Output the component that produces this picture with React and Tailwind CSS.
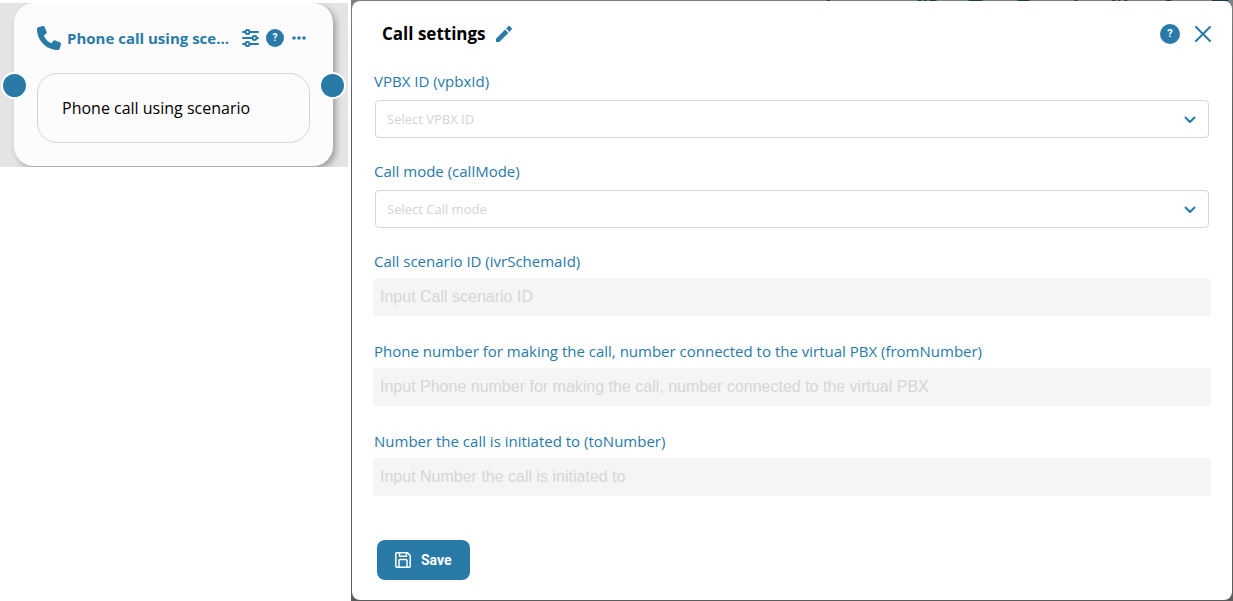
import React, { useState } from 'react';

const selects = [
  { id: 'vpbxId', label: 'VPBX ID (vpbxId)', placeholder: 'Select VPBX ID' },
  { id: 'callMode', label: 'Call mode (callMode)', placeholder: 'Select Call mode' },
];

const inputs = [
  { id: 'ivrSchemaId', label: 'Call scenario ID (ivrSchemaId)', placeholder: 'Input Call scenario ID' },
  {
    id: 'fromNumber',
    label: 'Phone number for making the call, number connected to the virtual PBX (fromNumber)',
    placeholder: 'Input Phone number for making the call, number connected to the virtual PBX',
  },
  { id: 'toNumber', label: 'Number the call is initiated to (toNumber)', placeholder: 'Input Number the call is initiated to' },
];

function PhoneIcon() {
  return (
    <svg className="w-6 h-6 shrink-0" viewBox="0 0 512 512" fill="currentColor">
      <path d="M164.9 24.6c-7.700-18.600-28-28.500-47.400-23.200l-88 24C12.100 30.200 0 46 0 64c0 247.400 200.600 448 448 448 18 0 33.800-12.100 38.600-29.500l24-88c5.300-19.400-4.600-39.700-23.200-47.400l-96-40c-16.300-6.800-35.200-2.100-46.300 11.600L304.700 368C234.300 334.700 177.300 277.700 144 207.300L193.300 167c13.700-11.200 18.400-30 11.600-46.300l-40-96z" />
    </svg>
  );
}

function SlidersIcon() {
  return (
    <svg className="w-[17px] h-[18px]" viewBox="0 0 17 18" fill="none" stroke="currentColor" strokeWidth="2" strokeLinecap="round">
      <path d="M1 3h2M8 3h8M1 9h9M15 9h1M1 15h2M8 15h8" />
      <circle cx="5.500" cy="3" r="2" />
      <circle cx="12.500" cy="9" r="2" />
      <circle cx="5.500" cy="15" r="2" />
    </svg>
  );
}

function DotsIcon() {
  return (
    <svg className="w-[14px] h-[4px]" viewBox="0 0 14 4" fill="currentColor">
      <circle cx="2" cy="2" r="1.800" />
      <circle cx="7" cy="2" r="1.800" />
      <circle cx="12" cy="2" r="1.800" />
    </svg>
  );
}

function PencilIcon() {
  return (
    <svg className="w-4 h-4" viewBox="0 0 16 16" fill="currentColor">
      <path d="M0 12.700V16h3.300L12.400 6.900 9.100 3.600zM10.100 2.600l3.300 3.300 2.100-2.100c.600-.600.600-1.300 0-1.900L14.100.500c-.600-.600-1.300-.600-1.900 0z" />
    </svg>
  );
}

function CloseIcon() {
  return (
    <svg className="w-4 h-4" viewBox="0 0 16 16" fill="none" stroke="currentColor" strokeWidth="2" strokeLinecap="round">
      <path d="M1 1l14 14M15 1L1 15" />
    </svg>
  );
}

function ChevronIcon() {
  return (
    <svg className="w-3 h-2 pointer-events-none absolute right-[13px] top-4" viewBox="0 0 12 8" fill="none" stroke="#2a7aa8" strokeWidth="2" strokeLinecap="round" strokeLinejoin="round">
      <path d="M1.500 1.500L6 6l4.500-4.500" />
    </svg>
  );
}

function SaveIcon() {
  return (
    <svg className="w-4 h-4" viewBox="0 0 16 16" fill="none" stroke="currentColor" strokeWidth="1.500" strokeLinejoin="round">
      <path d="M.800 1.800a1 1 0 0 1 1-1h10.700l2.700 2.700v10.700a1 1 0 0 1-1 1H1.800a1 1 0 0 1-1-1z" />
      <path d="M4.500 1v3.200h7V1M4 15V8.500a1 1 0 0 1 1-1h6a1 1 0 0 1 1 1V15" />
    </svg>
  );
}

// Tops of the toolbar icons that stay visible above the dialog
function ToolbarEdge() {
  return (
    <svg className="block w-full h-px" viewBox="0 0 882 1" preserveAspectRatio="none" fill="#173c56">
      <path d="M476 0h3v1h-3zM567 0h4v1h-4zM573 0h3v1h-3zM579 0h7v1h-7zM618 0h14v1h-14zM667 0h12v1h-12zM724 0h3v1h-3zM762 0h3v1h-3zM768 0h2v1h-2zM774 0h3v1h-3zM816 0h5v1h-5zM862 0h16v1h-16z" />
    </svg>
  );
}

function ScenarioNode() {
  return (
    <section className="w-[348px] shrink-0 self-start mt-[3px] pl-[14px] pr-[15px] pb-px bg-[#e4e4e4] overflow-hidden">
      <div className="relative bg-[#fcfcfc] rounded-[20px] px-[23px] pt-5 pb-[23px] shadow-[3px_3px_6px_rgba(0,0,0,0.3)]">
        <div className="h-[30px] flex items-center text-[#2a7aa8]">
          <PhoneIcon />
          <h2 title="Phone call using scenario" className="ml-1.5 w-[167px] whitespace-nowrap font-bold text-[15px] leading-6">
            Phone call using sce...
          </h2>
          <button type="button" aria-label="Parameters" className="ml-2">
            <SlidersIcon />
          </button>
          <button type="button" aria-label="Help" className="ml-[7px] w-[18px] h-[18px] rounded-full bg-[#2a7aa8] text-white font-[Roboto] font-bold text-[10px] leading-[18px]">
            ?
          </button>
          <button type="button" aria-label="More" className="ml-2">
            <DotsIcon />
          </button>
        </div>
        <div className="mt-5 h-[70px] flex items-center px-6 border border-[#d6d6d6] rounded-[20px] text-base text-black">
          Phone call using scenario
        </div>
        <span className="absolute -left-[13px] top-[69px] w-[27px] h-[27px] rounded-full bg-[#2a7aa8] border-2 border-white" />
        <span className="absolute -right-[13px] top-[69px] w-[27px] h-[27px] rounded-full bg-[#2a7aa8] border-2 border-white" />
      </div>
    </section>
  );
}

function CallSettings() {
  const [values, setValues] = useState({});

  const handleChange = (e) => setValues({ ...values, [e.target.id]: e.target.value });

  return (
    <section className="flex-1 min-w-0 flex flex-col pl-px pr-px pb-px bg-linear-to-b from-[#7f7f7f] to-[#5c5c5c] to-20%">
      <ToolbarEdge />
      <div className="flex-1 bg-white rounded-lg">
        <header className="h-[68px] pb-0.5 flex items-center pl-[30px] pr-[21px]">
          <h1 className="font-bold text-[17px] leading-6 text-black">Call settings</h1>
          <button type="button" aria-label="Rename" className="ml-2.5 text-[#2a7aa8]">
            <PencilIcon />
          </button>
          <button type="button" aria-label="Help" className="ml-auto w-5 h-5 rounded-full bg-[#2a7aa8] text-white font-[Roboto] font-bold text-[11px] leading-5">
            ?
          </button>
          <button type="button" aria-label="Close" className="ml-[15px] text-[#2a7aa8]">
            <CloseIcon />
          </button>
        </header>

        <form className="px-[21px] pb-5" onSubmit={(e) => e.preventDefault()}>
          {selects.map((field) => (
            <div key={field.id} className="mb-[21px]">
              <label htmlFor={field.id} className="block pl-px text-[15px] leading-6 text-[#2a7aa8]">
                {field.label}
              </label>
              <div className="relative mt-[7px] mx-0.5">
                <select
                  id={field.id}
                  value={values[field.id] || ''}
                  onChange={handleChange}
                  className="block w-full h-[38px] pl-[11px] pr-10 pt-0.5 appearance-none bg-white border border-[#d6d6d6] rounded text-[13px] text-[#d4d4d4]"
                >
                  <option value="">{field.placeholder}</option>
                </select>
                <ChevronIcon />
              </div>
            </div>
          ))}

          {inputs.map((field) => (
            <div key={field.id} className="mb-[23px]">
              <label htmlFor={field.id} className="block pl-px text-[15px] leading-6 text-[#2a7aa8]">
                {field.label}
              </label>
              <input
                id={field.id}
                type="text"
                value={values[field.id] || ''}
                onChange={handleChange}
                placeholder={field.placeholder}
                className="block mt-[5px] w-full h-[38px] px-[7px] bg-[#f5f5f5] rounded font-['Liberation_Sans',sans-serif] text-base text-black placeholder:text-[#d6d6d6]"
              />
            </div>
          ))}

          <button type="submit" className="mt-11 ml-1 h-10 px-[18px] flex items-center gap-2.5 bg-[#2a7aa8] rounded-lg text-white font-[Roboto] font-bold text-sm">
            <SaveIcon />
            Save
          </button>
        </form>
      </div>
    </section>
  );
}

export default function App() {
  return (
    <main className="min-h-screen flex gap-[3px] bg-white font-['Open_Sans','Noto_Sans',sans-serif]">
      <ScenarioNode />
      <CallSettings />
    </main>
  );
}
